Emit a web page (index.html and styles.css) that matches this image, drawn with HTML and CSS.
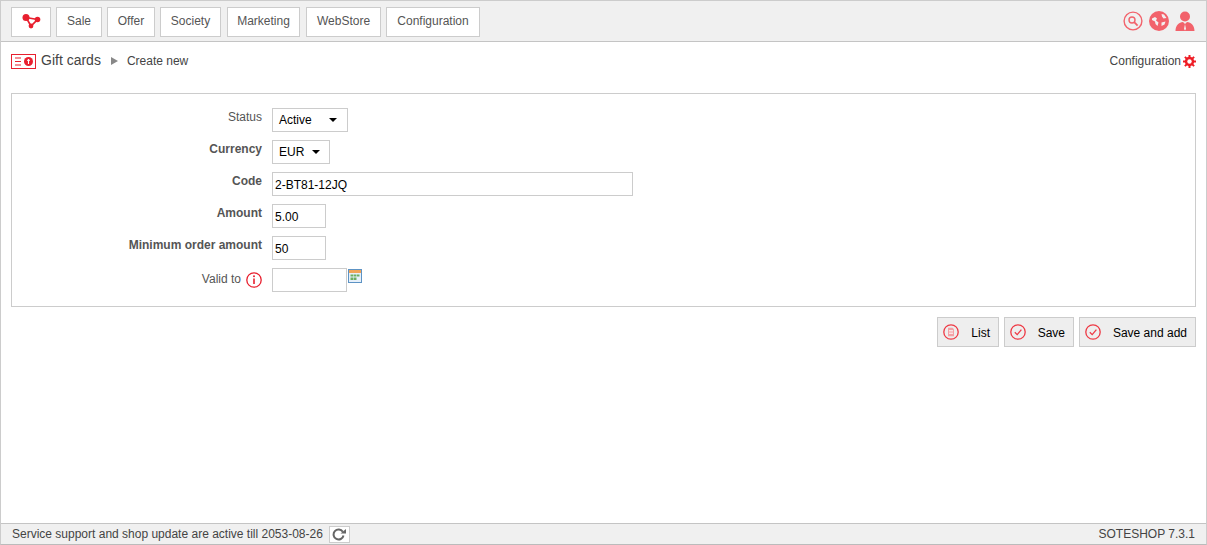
FILE: index.html
```html
<!DOCTYPE html>
<html lang="en">
<head>
<meta charset="utf-8">
<title>Gift cards</title>
<link rel="stylesheet" href="styles.css">
</head>
<body>
<div class="page">
  <header class="topbar">
    <nav class="nav">
      <a class="nav-btn nav-logo"><svg width="19" height="16" viewBox="0 0 19 16"><g fill="#e8202f"><circle cx="4" cy="4.5" r="3.5"/><circle cx="15.5" cy="6.5" r="2.8"/><circle cx="9" cy="13" r="2.4"/></g><path d="M4 4.5L15.5 6.5L9 13Z" fill="none" stroke="#e8202f" stroke-width="1.7"/></svg></a>
      <a class="nav-btn w46">Sale</a>
      <a class="nav-btn w48">Offer</a>
      <a class="nav-btn w61">Society</a>
      <a class="nav-btn w73">Marketing</a>
      <a class="nav-btn w75">WebStore</a>
      <a class="nav-btn w94">Configuration</a>
    </nav>
    <div class="top-icons">
      <svg width="20" height="20" viewBox="0 0 20 20"><circle cx="10" cy="10" r="8.9" fill="none" stroke="#f2626b" stroke-width="1.4"/><circle cx="9" cy="9" r="3" fill="none" stroke="#f2626b" stroke-width="1.4"/><path d="M11.2 11.2L14.6 14.6" stroke="#f2626b" stroke-width="1.8"/></svg>
      <svg width="20" height="20" viewBox="0 0 20 20"><circle cx="10" cy="10" r="10" fill="#f2626b"/><path d="M3 7.5L6 6L8 7.5L7 9.5L9.5 11.5L8.5 15L6.5 13L6 10.5L3 9ZM12.5 3L15 3.5L17.5 7L14.5 7.5L13 5.5ZM12.5 11.5L16.5 10.5L15.5 13.5L12.5 15Z" fill="#f3f0f0"/></svg>
      <svg width="20" height="20" viewBox="0 0 20 20"><circle cx="10" cy="5.5" r="5" fill="#f2626b"/><path d="M0.5 20C0.5 14 4 11.5 8 11L10 13L12 11C16 11.5 19.5 14 19.5 20Z" fill="#f2626b"/><path d="M10 13L11 18L10 19.5L9 18Z" fill="#f3f0f0"/></svg>
    </div>
  </header>

  <div class="crumbs">
    <div class="crumb-left">
      <svg class="crumb-icon" width="25" height="15" viewBox="0 0 25 15"><rect x="0.5" y="0.5" width="24" height="14" fill="#fff" stroke="#e8202f"/><path d="M4 4h6M4 7.5h6M4 11h6" stroke="#e8202f" stroke-width="1.2"/><circle cx="17.5" cy="7.5" r="4.5" fill="#e8202f"/><path d="M17.5 5v5M16.2 6.4h2.6" stroke="#fff" stroke-width="1.1"/></svg>
      <span class="crumb-title">Gift cards</span>
      <span class="crumb-sep"></span>
      <span class="crumb-sub">Create new</span>
    </div>
    <div class="crumb-right">
      <span>Configuration</span>
      <svg width="13" height="13" viewBox="0 0 13 13"><g stroke="#ee1c25" stroke-width="2"><path d="M6.5 0v13M0 6.5h13M1.900 1.900l9.200 9.200M11.100 1.900l-9.200 9.200"/></g><circle cx="6.5" cy="6.5" r="3.700" fill="none" stroke="#ee1c25" stroke-width="2"/><circle cx="6.5" cy="6.5" r="2.200" fill="#fff"/></svg>
    </div>
  </div>

  <main class="content">
    <form class="panel">
      <div class="row">
        <label class="lbl">Status</label>
        <div class="select w76"><span>Active</span><i class="caret"></i></div>
      </div>
      <div class="row">
        <label class="lbl bold">Currency</label>
        <div class="select w58"><span>EUR</span><i class="caret"></i></div>
      </div>
      <div class="row">
        <label class="lbl bold">Code</label>
        <div class="input w361">2-BT81-12JQ</div>
      </div>
      <div class="row">
        <label class="lbl bold">Amount</label>
        <div class="input w54">5.00</div>
      </div>
      <div class="row">
        <label class="lbl bold">Minimum order amount</label>
        <div class="input w54">50</div>
      </div>
      <div class="row">
        <label class="lbl with-info">Valid to
          <svg class="info" width="16" height="16" viewBox="0 0 16 16"><circle cx="8" cy="8" r="7.2" fill="none" stroke="#e8202f" stroke-width="1.3"/><path d="M8 6.5v5.5" stroke="#e8202f" stroke-width="1.6"/><circle cx="8" cy="4.2" r="1" fill="#e8202f"/></svg>
        </label>
        <div class="input w75"></div>
        <svg class="cal" width="14" height="14" viewBox="0 0 14 14"><rect x="0.5" y="0.5" width="13" height="13" fill="#e6f0fa" stroke="#5d93c4"/><rect x="1" y="1" width="12" height="3" fill="#f0a458"/><path d="M2.5 5.5h3v2h-3zM6 5.5h2.500v2H6zM9 5.500h2.500v2H9zM2.500 8.500h3v2.500h-3zM6 8.500h2.500v2.500H6z" fill="#6cae62"/></svg>
      </div>
    </form>

    <div class="actions">
      <a class="act w62"><svg width="16" height="16" viewBox="0 0 16 16"><circle cx="8" cy="8" r="7.2" fill="none" stroke="#ee3a45" stroke-width="1.3"/><path d="M5 3.800h4.500L11 5.300v6.900H5z" fill="#f4a0a5"/><path d="M6 6.500h4M6 8h4M6 9.500h4" stroke="#fff" stroke-width=".7"/></svg><span class="act-label">List</span></a>
      <a class="act w70"><svg width="16" height="16" viewBox="0 0 16 16"><circle cx="8" cy="8" r="7.200" fill="none" stroke="#ee3a45" stroke-width="1.300"/><path d="M4.800 8.200L7.200 10.600L11.400 5.600" fill="none" stroke="#ee3a45" stroke-width="1.300"/></svg><span class="act-label">Save</span></a>
      <a class="act w117"><svg width="16" height="16" viewBox="0 0 16 16"><circle cx="8" cy="8" r="7.200" fill="none" stroke="#ee3a45" stroke-width="1.300"/><path d="M4.800 8.200L7.200 10.600L11.400 5.600" fill="none" stroke="#ee3a45" stroke-width="1.300"/></svg><span class="act-label">Save and add</span></a>
    </div>
  </main>

  <footer class="footer">
    <div class="foot-left">
      <span>Service support and shop update are active till 2053-08-26</span>
      <a class="refresh"><svg width="14" height="13" viewBox="0 0 14 13"><path d="M10.800 3.800A5 5 0 1 0 11.500 7.500" fill="none" stroke="#666" stroke-width="2"/><path d="M8.500 5.500H14V1Z" fill="#666"/></svg></a>
    </div>
    <span class="foot-right">SOTESHOP 7.3.1</span>
  </footer>
</div>
</body>
</html>
```
FILE: styles.css
```css
* { box-sizing: border-box; }
html, body { margin: 0; padding: 0; height: 100%; }
body { font: 12px/16px "Liberation Sans", Arial, sans-serif; color: #444; background: #fff; }
.page { height: 545px; display: flex; flex-direction: column; border: 1px solid #ccc; border-bottom-color: #bbb; overflow: hidden; }

.topbar { height: 42px; flex: none; margin-top: -1px; padding: 6px 10px 0; background: #f0f0f0; border-top: 1px solid #ccc; border-bottom: 1px solid #c4c4c4; display: flex; justify-content: space-between; }
.nav { display: flex; gap: 5px; height: 30px; }
.nav-btn { height: 30px; padding-bottom: 2px; display: flex; align-items: center; justify-content: center; background: #fff; border: 1px solid #ccc; color: #555; }
.nav-logo { width: 40px; }
.w46 { width: 46px; } .w48 { width: 48px; } .w75 { width: 75px; } .w94 { width: 94px; }
.nav-btn.w61 { width: 61px; }
.nav-btn.w73 { width: 73px; margin-left: 1px; }
.nav-btn.w75 { margin-left: 1px; }
.top-icons { display: flex; gap: 6px; padding: 4px 0 0; margin-right: 1px; }

.crumbs { height: 38px; flex: none; padding: 0 10px; display: flex; justify-content: space-between; align-items: center; color: #444; }
.crumb-left { display: flex; align-items: center; margin-bottom: 2px; }
.crumb-icon { margin-right: 5px; margin-top: 2px; }
.crumb-title { font-size: 14px; }
.crumb-sep { width: 0; height: 0; margin: 2px 10px 0 10px; border-left: 7px solid #888; border-top: 4px solid transparent; border-bottom: 4px solid transparent; }
.crumb-sub { margin-top: 1px; margin-left: -1px; }
.crumb-right { display: flex; align-items: center; gap: 2px; }

.content { flex: 1; padding: 13px 10px 0; }
.panel { height: 214px; border: 1px solid #ccc; padding: 14px 0 0; display: flex; flex-direction: column; gap: 8px; }
.row { height: 24px; display: flex; align-items: flex-start; }
.lbl { width: 250px; flex: none; text-align: right; color: #555; line-height: 16px; margin-top: 1px; }
.bold { font-weight: bold; }
.with-info { display: flex; justify-content: flex-end; align-items: center; gap: 5px; margin-top: 2px; }
.info { margin-top: 2px; }
.select, .input { height: 24px; margin-left: 10px; border: 1px solid #ccc; background: #fff; color: #000; display: flex; align-items: center; }
.select { padding: 0 6px; justify-content: space-between; }
.input { padding: 1px 2px 0; }
.select.w76 { width: 76px; padding-right: 10px; }
.select.w58 { width: 58px; padding-right: 9px; }
.w361 { width: 361px; } .w54 { width: 54px; }
.caret { width: 0; height: 0; border-top: 4px solid #000; border-left: 4px solid transparent; border-right: 4px solid transparent; }
.cal { margin: 1px 0 0 1px; }

.actions { margin-top: 10px; display: flex; justify-content: flex-end; gap: 5px; }
.act { height: 30px; background: #eee; border: 1px solid #ccc; color: #000; display: flex; align-items: center; justify-content: space-between; padding: 0 8px 0 5px; }
.act-label { margin-top: 2px; }
.w62 { width: 62px; } .w70 { width: 70px; } .w117 { width: 117px; }

.footer { height: 21px; flex: none; background: #f0f0f0; border-top: 1px solid #c4c4c4; padding: 0 11px 0 11px; display: flex; justify-content: space-between; align-items: center; color: #444; }
.foot-left { display: flex; align-items: center; gap: 6px; }
.refresh { width: 21px; height: 17px; background: #fff; border: 1px solid #ccc; display: flex; align-items: center; justify-content: center; }
```
